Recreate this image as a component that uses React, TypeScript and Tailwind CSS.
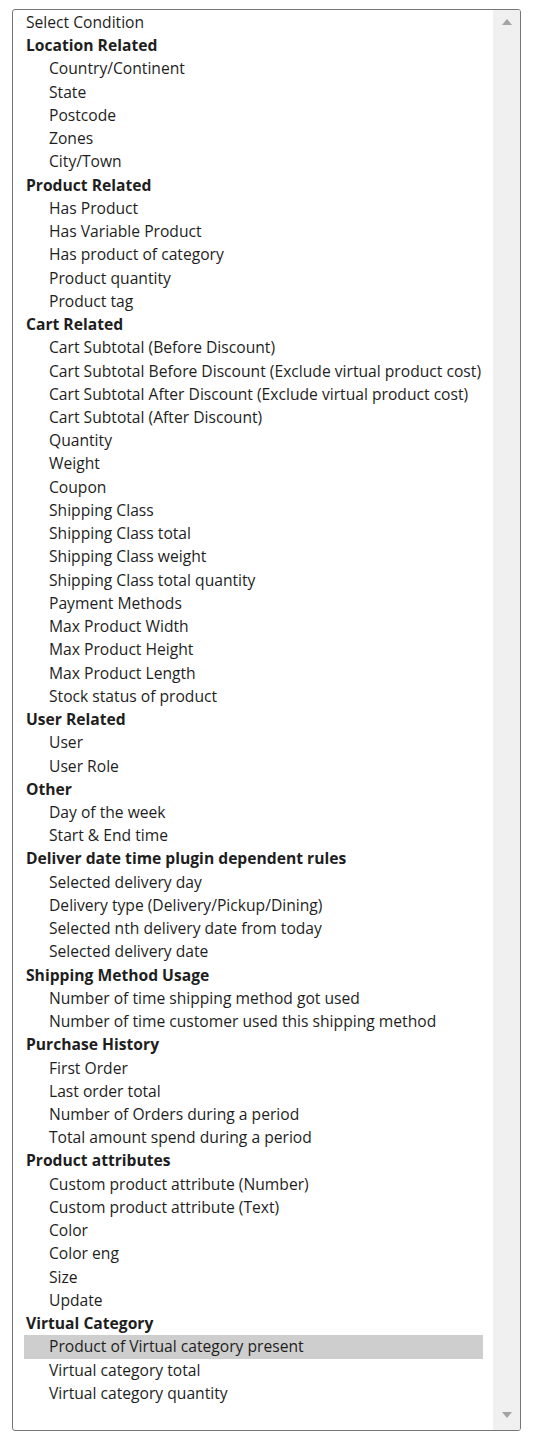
const GROUPS: { label: string; options: string[] }[] = [
  {
    label: 'Location Related',
    options: ['Country/Continent', 'State', 'Postcode', 'Zones', 'City/Town'],
  },
  {
    label: 'Product Related',
    options: ['Has Product', 'Has Variable Product', 'Has product of category', 'Product quantity', 'Product tag'],
  },
  {
    label: 'Cart Related',
    options: [
      'Cart Subtotal (Before Discount)',
      'Cart Subtotal Before Discount (Exclude virtual product cost)',
      'Cart Subtotal After Discount (Exclude virtual product cost)',
      'Cart Subtotal (After Discount)',
      'Quantity',
      'Weight',
      'Coupon',
      'Shipping Class',
      'Shipping Class total',
      'Shipping Class weight',
      'Shipping Class total quantity',
      'Payment Methods',
      'Max Product Width',
      'Max Product Height',
      'Max Product Length',
      'Stock status of product',
    ],
  },
  { label: 'User Related', options: ['User', 'User Role'] },
  { label: 'Other', options: ['Day of the week', 'Start & End time'] },
  {
    label: 'Deliver date time plugin dependent rules',
    options: [
      'Selected delivery day',
      'Delivery type (Delivery/Pickup/Dining)',
      'Selected nth delivery date from today',
      'Selected delivery date',
    ],
  },
  {
    label: 'Shipping Method Usage',
    options: ['Number of time shipping method got used', 'Number of time customer used this shipping method'],
  },
  {
    label: 'Purchase History',
    options: ['First Order', 'Last order total', 'Number of Orders during a period', 'Total amount spend during a period'],
  },
  {
    label: 'Product attributes',
    options: [
      'Custom product attribute (Number)',
      'Custom product attribute (Text)',
      'Color',
      'Color eng',
      'Size',
      'Update',
    ],
  },
  {
    label: 'Virtual Category',
    options: ['Product of Virtual category present', 'Virtual category total', 'Virtual category quantity'],
  },
];

const SELECTED = 'Product of Virtual category present';

export default function App() {
  return (
    <div className="min-h-[1445px] bg-white pl-[12px] pt-[9px]" style={{ fontFamily: '"Open Sans", "Noto Sans", sans-serif' }}>
      <div className="flex w-[509px] h-[1422px] border border-[#767676] rounded-[3px] overflow-hidden text-[15.65px] text-[#1e1e1e]">
        {/* options */}
        <div className="flex-1 pl-[11px] pr-[10px] pt-[1px]">
          <div className="h-[23.24px] leading-[23.24px] pl-[2px] whitespace-nowrap">Select Condition</div>
          {GROUPS.map(g => (
            <div key={g.label}>
              <div className="h-[23.24px] leading-[23.24px] pl-[2px] font-bold whitespace-nowrap">{g.label}</div>
              {g.options.map(o => (
                <div
                  key={o}
                  className={
                    o === SELECTED
                      ? 'h-[23.24px] leading-[23.24px] pl-[25px] whitespace-nowrap bg-[#cecece]'
                      : 'h-[23.24px] leading-[23.24px] pl-[25px] whitespace-nowrap'
                  }
                >
                  {o}
                </div>
              ))}
            </div>
          ))}
        </div>

        {/* scrollbar */}
        <div className="w-[27px] bg-[#f0f0f0] flex flex-col justify-between items-center py-[8px]">
          <svg width="10" height="6" viewBox="0 0 10 6" className="mt-[1px]">
            <polygon points="5,0 10,6 0,6" fill="#a3a3a3" />
          </svg>
          <svg width="10" height="6" viewBox="0 0 10 6" className="mb-[4px]">
            <polygon points="0,0 10,0 5,6" fill="#a3a3a3" />
          </svg>
        </div>
      </div>
    </div>
  );
}
